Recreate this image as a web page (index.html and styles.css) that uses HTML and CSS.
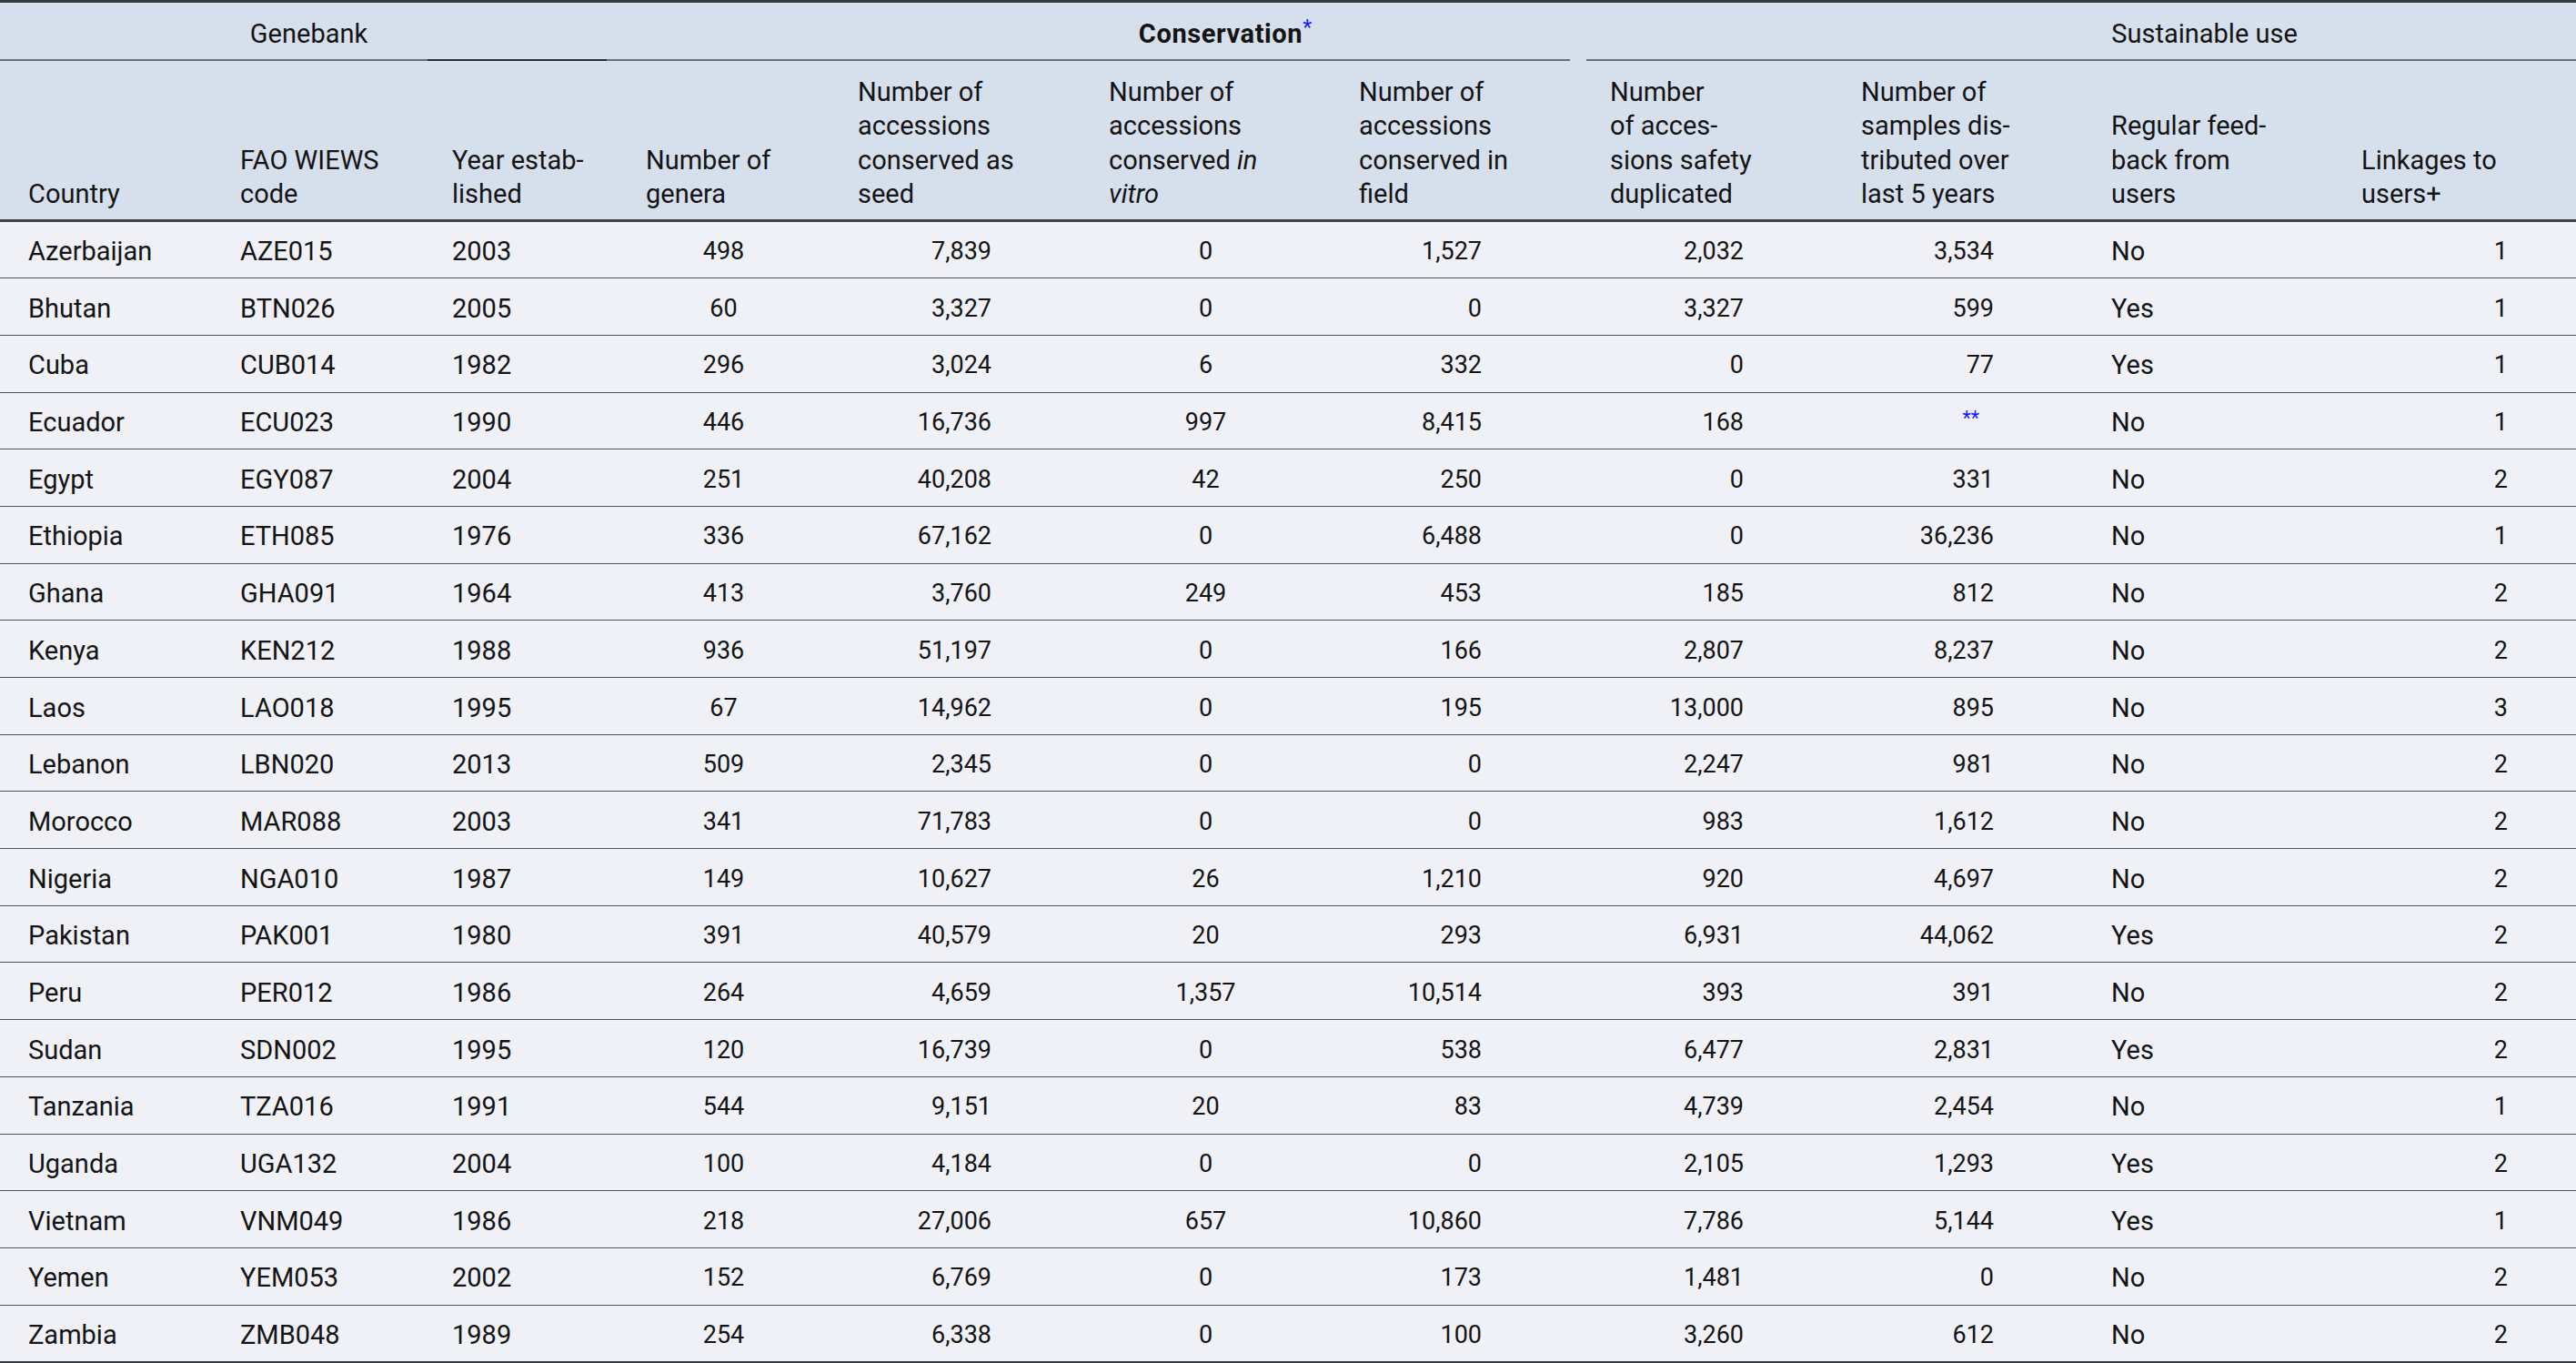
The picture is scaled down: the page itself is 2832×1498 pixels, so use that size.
FILE: index.html
```html
<!DOCTYPE html>
<html lang="en">
<head>
  <meta charset="UTF-8">
  <title>Genebank conservation and sustainable use</title>
  <link rel="stylesheet" href="styles.css">
</head>
<body>

<table class="gene-table">
  <colgroup>
    <col style="width:233px">
    <col style="width:233px">
    <col style="width:213px">
    <col style="width:233px">
    <col style="width:276px">
    <col style="width:275px">
    <col style="width:276px">
    <col style="width:276px">
    <col style="width:275px">
    <col style="width:275px">
    <col>
  </colgroup>
  <thead>
    <tr class="group">
      <th colspan="3" class="g-bank">Genebank</th>
      <th colspan="5" class="g-cons"><strong>Conservation</strong><sup class="note">*</sup></th>
      <th colspan="3" class="g-use">Sustainable use</th>
    </tr>
    <tr class="cols">
      <th>Country</th>
      <th>FAO WIEWS<br>code</th>
      <th>Year estab-<br>lished</th>
      <th>Number of<br>genera</th>
      <th>Number of<br>accessions<br>conserved as<br>seed</th>
      <th>Number of<br>accessions<br>conserved <em>in</em><br><em>vitro</em></th>
      <th>Number of<br>accessions<br>conserved in<br>field</th>
      <th>Number<br>of acces-<br>sions safety<br>duplicated</th>
      <th>Number of<br>samples dis-<br>tributed over<br>last 5 years</th>
      <th>Regular feed-<br>back from<br>users</th>
      <th>Linkages to<br>users+</th>
    </tr>
  </thead>
  <tbody>
    <tr><td>Azerbaijan</td><td>AZE015</td><td>2003</td><td class="c">498</td><td class="r">7,839</td><td class="c">0</td><td class="r f">1,527</td><td class="r">2,032</td><td class="r">3,534</td><td>No</td><td class="k">1</td></tr>
    <tr><td>Bhutan</td><td>BTN026</td><td>2005</td><td class="c">60</td><td class="r">3,327</td><td class="c">0</td><td class="r f">0</td><td class="r">3,327</td><td class="r">599</td><td>Yes</td><td class="k">1</td></tr>
    <tr><td>Cuba</td><td>CUB014</td><td>1982</td><td class="c">296</td><td class="r">3,024</td><td class="c">6</td><td class="r f">332</td><td class="r">0</td><td class="r">77</td><td>Yes</td><td class="k">1</td></tr>
    <tr><td>Ecuador</td><td>ECU023</td><td>1990</td><td class="c">446</td><td class="r">16,736</td><td class="c">997</td><td class="r f">8,415</td><td class="r">168</td><td class="r"><sup class="note missing">**</sup></td><td>No</td><td class="k">1</td></tr>
    <tr><td>Egypt</td><td>EGY087</td><td>2004</td><td class="c">251</td><td class="r">40,208</td><td class="c">42</td><td class="r f">250</td><td class="r">0</td><td class="r">331</td><td>No</td><td class="k">2</td></tr>
    <tr><td>Ethiopia</td><td>ETH085</td><td>1976</td><td class="c">336</td><td class="r">67,162</td><td class="c">0</td><td class="r f">6,488</td><td class="r">0</td><td class="r">36,236</td><td>No</td><td class="k">1</td></tr>
    <tr><td>Ghana</td><td>GHA091</td><td>1964</td><td class="c">413</td><td class="r">3,760</td><td class="c">249</td><td class="r f">453</td><td class="r">185</td><td class="r">812</td><td>No</td><td class="k">2</td></tr>
    <tr><td>Kenya</td><td>KEN212</td><td>1988</td><td class="c">936</td><td class="r">51,197</td><td class="c">0</td><td class="r f">166</td><td class="r">2,807</td><td class="r">8,237</td><td>No</td><td class="k">2</td></tr>
    <tr><td>Laos</td><td>LAO018</td><td>1995</td><td class="c">67</td><td class="r">14,962</td><td class="c">0</td><td class="r f">195</td><td class="r">13,000</td><td class="r">895</td><td>No</td><td class="k">3</td></tr>
    <tr><td>Lebanon</td><td>LBN020</td><td>2013</td><td class="c">509</td><td class="r">2,345</td><td class="c">0</td><td class="r f">0</td><td class="r">2,247</td><td class="r">981</td><td>No</td><td class="k">2</td></tr>
    <tr><td>Morocco</td><td>MAR088</td><td>2003</td><td class="c">341</td><td class="r">71,783</td><td class="c">0</td><td class="r f">0</td><td class="r">983</td><td class="r">1,612</td><td>No</td><td class="k">2</td></tr>
    <tr><td>Nigeria</td><td>NGA010</td><td>1987</td><td class="c">149</td><td class="r">10,627</td><td class="c">26</td><td class="r f">1,210</td><td class="r">920</td><td class="r">4,697</td><td>No</td><td class="k">2</td></tr>
    <tr><td>Pakistan</td><td>PAK001</td><td>1980</td><td class="c">391</td><td class="r">40,579</td><td class="c">20</td><td class="r f">293</td><td class="r">6,931</td><td class="r">44,062</td><td>Yes</td><td class="k">2</td></tr>
    <tr><td>Peru</td><td>PER012</td><td>1986</td><td class="c">264</td><td class="r">4,659</td><td class="c">1,357</td><td class="r f">10,514</td><td class="r">393</td><td class="r">391</td><td>No</td><td class="k">2</td></tr>
    <tr><td>Sudan</td><td>SDN002</td><td>1995</td><td class="c">120</td><td class="r">16,739</td><td class="c">0</td><td class="r f">538</td><td class="r">6,477</td><td class="r">2,831</td><td>Yes</td><td class="k">2</td></tr>
    <tr><td>Tanzania</td><td>TZA016</td><td>1991</td><td class="c">544</td><td class="r">9,151</td><td class="c">20</td><td class="r f">83</td><td class="r">4,739</td><td class="r">2,454</td><td>No</td><td class="k">1</td></tr>
    <tr><td>Uganda</td><td>UGA132</td><td>2004</td><td class="c">100</td><td class="r">4,184</td><td class="c">0</td><td class="r f">0</td><td class="r">2,105</td><td class="r">1,293</td><td>Yes</td><td class="k">2</td></tr>
    <tr><td>Vietnam</td><td>VNM049</td><td>1986</td><td class="c">218</td><td class="r">27,006</td><td class="c">657</td><td class="r f">10,860</td><td class="r">7,786</td><td class="r">5,144</td><td>Yes</td><td class="k">1</td></tr>
    <tr><td>Yemen</td><td>YEM053</td><td>2002</td><td class="c">152</td><td class="r">6,769</td><td class="c">0</td><td class="r f">173</td><td class="r">1,481</td><td class="r">0</td><td>No</td><td class="k">2</td></tr>
    <tr><td>Zambia</td><td>ZMB048</td><td>1989</td><td class="c">254</td><td class="r">6,338</td><td class="c">0</td><td class="r f">100</td><td class="r">3,260</td><td class="r">612</td><td>No</td><td class="k">2</td></tr>
  </tbody>
</table>

</body>
</html>
```

FILE: styles.css
```css
body {
  margin: 0;
  background: #eff1f6;
  font-family: Roboto, "Liberation Sans", sans-serif;
  font-size: 29px;
  color: #141414;
}
.gene-table {
  width: 100%;
  table-layout: fixed;
  border-collapse: separate;
  border-spacing: 0;
  border-top: 3px solid #35383d;
}
.gene-table th, .gene-table td {
  padding: 12px 31px;
  line-height: 37.5px;
  text-align: left;
  font-weight: normal;
  white-space: nowrap;
}
.gene-table thead th {
  background-color: #d6dfec;
}

/* group row with the broken underline */
.group th {
  padding: 16px 0 10px;
  text-align: center;
  background-repeat: no-repeat;
  background-position: left bottom;
  background-size: 100% 2px;
}
.group .g-bank {
  background-image: linear-gradient(to right, #6b6f76 470px, #2b2e33 470px 667px, #6b6f76 667px);
}
.group .g-cons {
  background-image: linear-gradient(to right, #6b6f76 1047px, transparent 1047px 1065px, #6b6f76 1065px);
}
.group .g-use {
  background-image: linear-gradient(#6b6f76, #6b6f76);
}
.group strong {
  font-weight: bold;
  letter-spacing: 0.6px;
}
.note {
  color: #1a1aff;
  font-size: 0.8em;
  line-height: 0;
  vertical-align: 0.4em;
}
.note.missing {
  padding-right: 16px;
  vertical-align: 0.3em;
}

.cols th {
  vertical-align: bottom;
  padding: 16px 31px 8px;
  border-bottom: 3px solid #3f4247;
}

.gene-table td {
  padding-top: 14.5px;
  padding-bottom: 9.7px;
  border-bottom: 1px solid #4d5156;
}
.gene-table tbody tr:last-child td {
  border-bottom: 3px solid #35383d;
}
.gene-table td.c, .gene-table td.r, .gene-table td.k {
  font-size: 27px;
}
.gene-table td.c {
  text-align: center;
  padding-left: 0;
  padding-right: 0;
}
.gene-table td.r {
  text-align: right;
  padding-right: 98px;
}
.gene-table td.f {
  padding-right: 110px;
}
.gene-table td.k {
  text-align: right;
  padding-right: 75px;
}
```
